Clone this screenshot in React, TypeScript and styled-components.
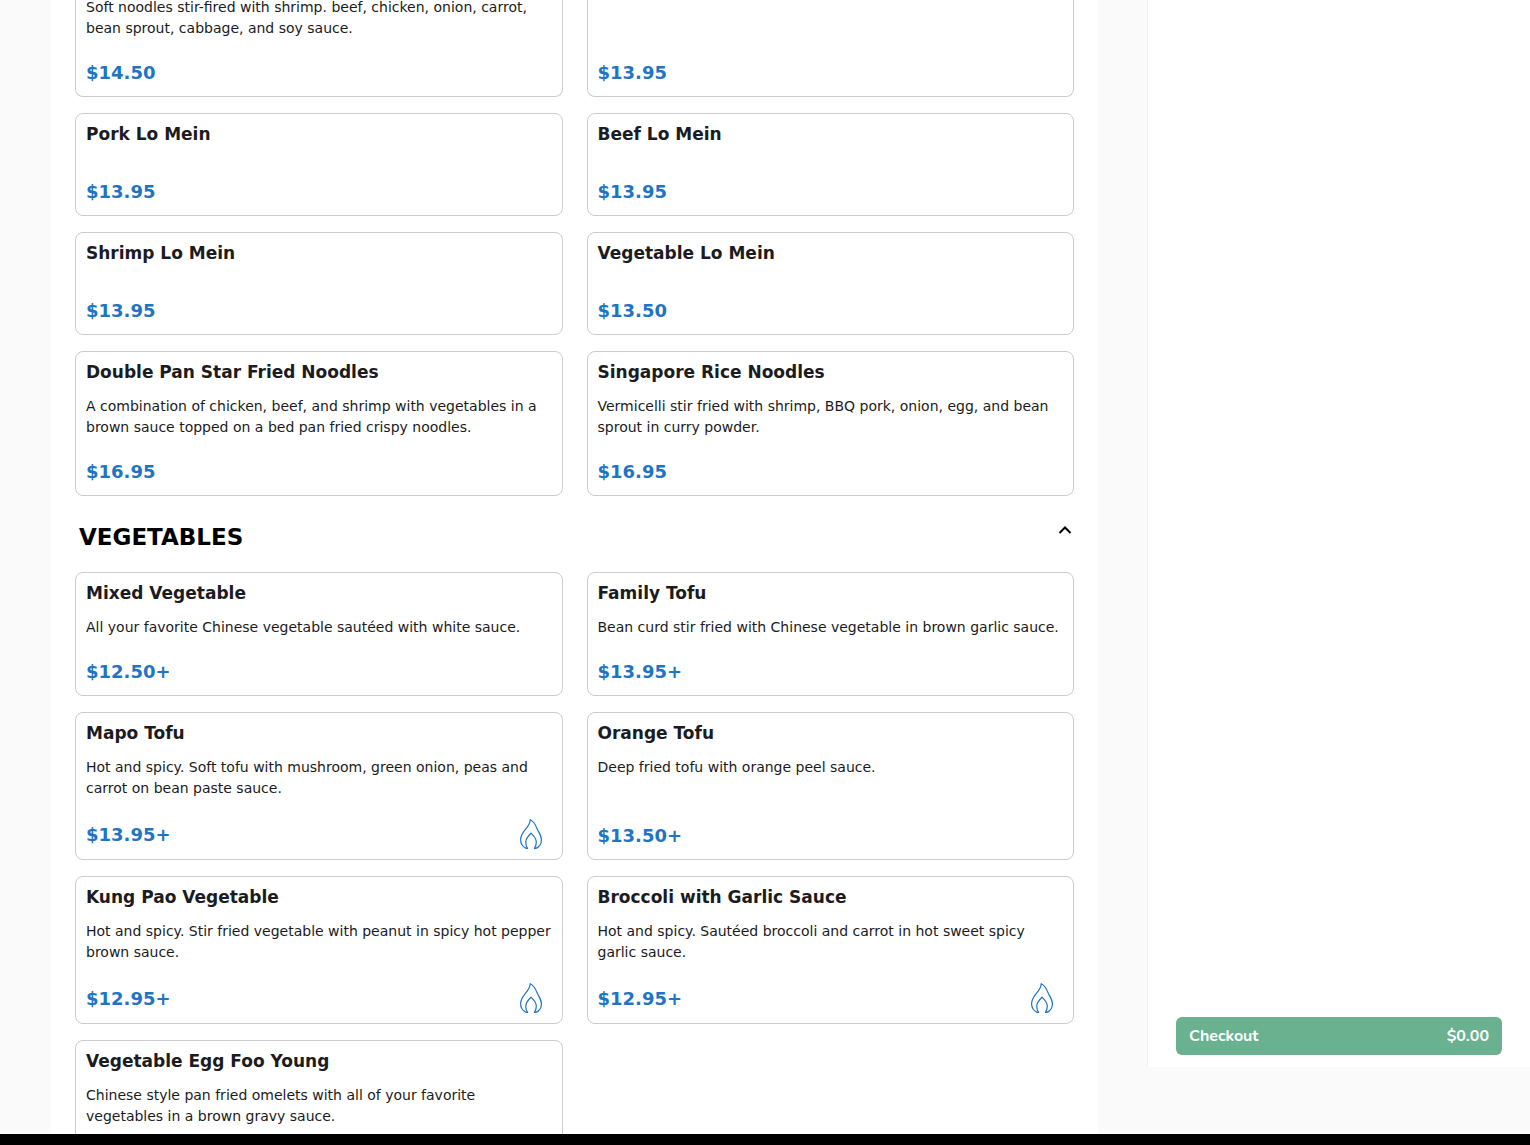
import React, { useState } from "react";
import styled, { createGlobalStyle } from "styled-components";

const GlobalStyle = createGlobalStyle`
  *, *::before, *::after { box-sizing: border-box; }
  body {
    margin: 0;
    background: #fafafa;
    color: #1b1b22;
    font-family: "DejaVu Sans", sans-serif;
  }
`;

const Screen = styled.div`
  display: flex;
  flex-direction: column;
  height: 100vh;
  overflow: hidden;
`;

const Body = styled.div`
  display: flex;
  flex: 1;
  min-height: 0;
`;

const Main = styled.main`
  flex: 1;
  min-width: 0;
  overflow: hidden;
  padding: 0 49px 0 51px;
`;

const Menu = styled.div`
  min-height: 100%;
  padding: 0 24px;
  background: #fff;
`;

const FooterBar = styled.footer`
  flex: none;
  height: 11px;
  background: #000;
`;

const Grid = styled.ul<{ $continued?: boolean }>`
  display: grid;
  grid-template-columns: repeat(2, minmax(0, 1fr));
  gap: 16px 24px;
  margin: ${(p) => (p.$continued ? "-3px" : "0")} 0 0;
  padding: 0;
  list-style: none;
`;

const Card = styled.li<{ $continued?: boolean }>`
  display: flex;
  flex-direction: column;
  padding: ${(p) => (p.$continued ? "0" : "8px")} 10px 10px;
  border: 1px solid #ccc;
  border-top-width: ${(p) => (p.$continued ? "0" : "1px")};
  border-radius: ${(p) => (p.$continued ? "0 0 8px 8px" : "8px")};
  background: #fff;
`;

const DishName = styled.h3`
  margin: 0 0 12px;
  font-size: 17px;
  line-height: 24px;
  font-weight: 700;
`;

const Description = styled.p`
  margin: 0;
  font-size: 14px;
  line-height: 21px;
`;

const PriceRow = styled.div`
  display: flex;
  align-items: center;
  justify-content: space-between;
  margin-top: auto;
  padding: 20px 10px 0 0;
`;

const Price = styled.span`
  color: #1f74c4;
  font-size: 18px;
  line-height: 27px;
  font-weight: 700;
`;

const SectionHeader = styled.div`
  display: flex;
  align-items: flex-start;
  justify-content: space-between;
  padding: 23px 0 17px 4px;
`;

const SectionTitle = styled.h2`
  margin: 0;
  color: #000;
  font-size: 23px;
  line-height: 36px;
  font-weight: 700;
`;

const Toggle = styled.button<{ $open: boolean }>`
  display: flex;
  padding: 2px 0;
  border: 0;
  background: none;
  cursor: pointer;

  svg {
    transform: rotate(${(p) => (p.$open ? "0deg" : "180deg")});
  }
`;

const Cart = styled.aside`
  display: flex;
  flex-direction: column;
  justify-content: flex-end;
  flex: none;
  width: 383px;
  height: calc(100vh - 78px);
  padding: 0 28px 12px;
  border-left: 1px solid #f0f0f0;
  background: #fff;
`;

const CheckoutButton = styled.button`
  display: flex;
  align-items: center;
  justify-content: space-between;
  height: 38px;
  padding: 0 13px;
  border: 0;
  border-radius: 6px;
  background: #6ab190;
  color: #fff;
  font-family: Nunito, Lato, sans-serif;
  font-size: 16px;
  line-height: 24px;
  font-weight: 700;
  cursor: pointer;
`;

const FlameIcon = () => (
  <svg width="22" height="30" viewBox="0 0 22 30" fill="none" stroke="#1f74c4" strokeWidth="1.2" strokeLinejoin="round" role="img" aria-label="Spicy">
    <path d="M7.600 29.400H6.200C2.500 27.800.6 24.500.6 20.600c0-4.800 2.800-7.800 5.400-11C8.300 6.900 10 4.200 10.200.7c3.300 1.700 5.300 4.800 6.500 8.400 1.600 3.800 4.700 7 4.700 11.600 0 4.200-2.100 7.300-5.600 8.700h-1.300C16 27 16.600 24.300 16.100 21.600 15.500 18.500 13.300 16.500 11 14.200 8.700 16.500 6.600 18.500 6 21.600c-.5 2.700 0 5.400 1.600 7.800Z" />
  </svg>
);

const ChevronUp = () => (
  <svg width="18" height="18" viewBox="0 0 18 18" fill="none" stroke="#000" strokeWidth="2" aria-hidden="true">
    <path d="M3.500 12 9 6.500l5.500 5.500" />
  </svg>
);

interface Dish {
  name?: string;
  description?: string;
  price?: string;
  spicy?: boolean;
}

const noodles: Dish[] = [
  {
    description: "Soft noodles stir-fired with shrimp. beef, chicken, onion, carrot, bean sprout, cabbage, and soy sauce.",
    price: "$14.50",
  },
  { price: "$13.95" },
  { name: "Pork Lo Mein", price: "$13.95" },
  { name: "Beef Lo Mein", price: "$13.95" },
  { name: "Shrimp Lo Mein", price: "$13.95" },
  { name: "Vegetable Lo Mein", price: "$13.50" },
  {
    name: "Double Pan Star Fried Noodles",
    description: "A combination of chicken, beef, and shrimp with vegetables in a brown sauce topped on a bed pan fried crispy noodles.",
    price: "$16.95",
  },
  {
    name: "Singapore Rice Noodles",
    description: "Vermicelli stir fried with shrimp, BBQ pork, onion, egg, and bean sprout in curry powder.",
    price: "$16.95",
  },
];

const vegetables: Dish[] = [
  { name: "Mixed Vegetable", description: "All your favorite Chinese vegetable sautéed with white sauce.", price: "$12.50+" },
  { name: "Family Tofu", description: "Bean curd stir fried with Chinese vegetable in brown garlic sauce.", price: "$13.95+" },
  {
    name: "Mapo Tofu",
    description: "Hot and spicy. Soft tofu with mushroom, green onion, peas and carrot on bean paste sauce.",
    price: "$13.95+",
    spicy: true,
  },
  { name: "Orange Tofu", description: "Deep fried tofu with orange peel sauce.", price: "$13.50+" },
  {
    name: "Kung Pao Vegetable",
    description: "Hot and spicy. Stir fried vegetable with peanut in spicy hot pepper brown sauce.",
    price: "$12.95+",
    spicy: true,
  },
  {
    name: "Broccoli with Garlic Sauce",
    description: "Hot and spicy. Sautéed broccoli and carrot in hot sweet spicy garlic sauce.",
    price: "$12.95+",
    spicy: true,
  },
  {
    name: "Vegetable Egg Foo Young",
    description: "Chinese style pan fried omelets with all of your favorite vegetables in a brown gravy sauce.",
  },
];

const DishCard = ({ dish }: { dish: Dish }) => (
  <Card $continued={!dish.name}>
    {dish.name && <DishName>{dish.name}</DishName>}
    {dish.description && <Description>{dish.description}</Description>}
    <PriceRow>
      {dish.price && <Price>{dish.price}</Price>}
      {dish.spicy && <FlameIcon />}
    </PriceRow>
  </Card>
);

export default function App() {
  const [open, setOpen] = useState(true);

  return (
    <>
      <GlobalStyle />
      <Screen>
        <Body>
          <Main>
            <Menu>
              <Grid $continued>
                {noodles.map((dish, i) => (
                  <DishCard key={i} dish={dish} />
                ))}
              </Grid>
              <SectionHeader>
                <SectionTitle>VEGETABLES</SectionTitle>
                <Toggle type="button" $open={open} aria-label="Toggle vegetables" aria-expanded={open} onClick={() => setOpen(!open)}>
                  <ChevronUp />
                </Toggle>
              </SectionHeader>
              {open && (
                <Grid>
                  {vegetables.map((dish) => (
                    <DishCard key={dish.name} dish={dish} />
                  ))}
                </Grid>
              )}
            </Menu>
          </Main>
          <Cart>
            <CheckoutButton type="button">
              <span>Checkout</span>
              <span>$0.00</span>
            </CheckoutButton>
          </Cart>
        </Body>
        <FooterBar />
      </Screen>
    </>
  );
}
